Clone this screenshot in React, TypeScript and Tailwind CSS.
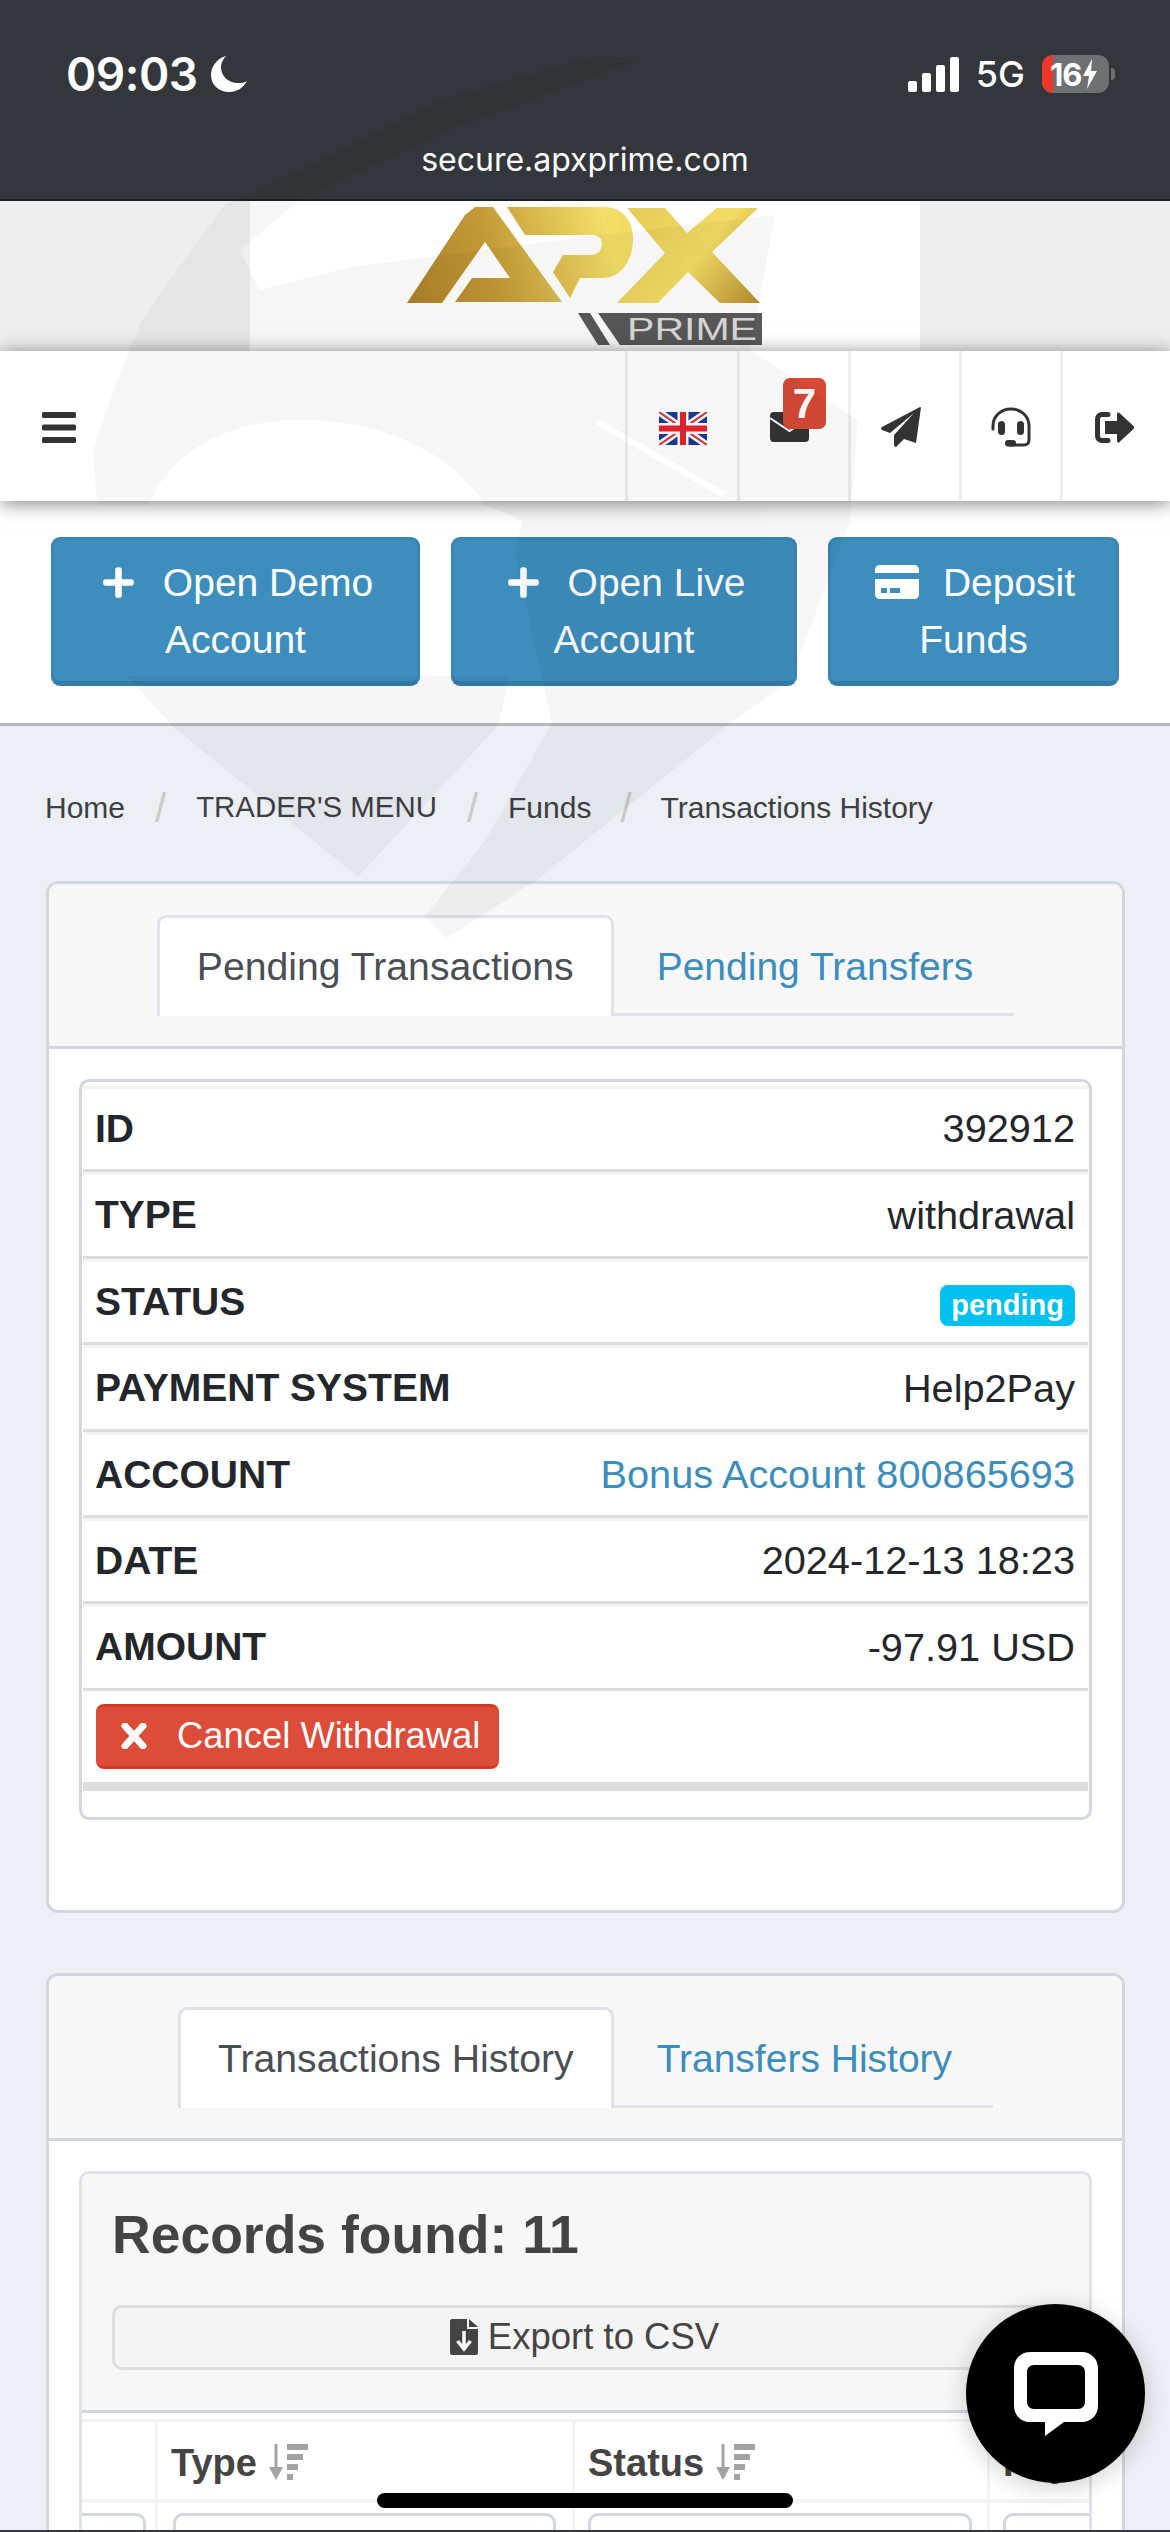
import { FaPlus } from 'react-icons/fa';

const rows = [
  { label: 'ID', value: '392912' },
  { label: 'TYPE', value: 'withdrawal' },
  { label: 'STATUS', value: 'pending', badge: true },
  { label: 'PAYMENT SYSTEM', value: 'Help2Pay' },
  { label: 'ACCOUNT', value: 'Bonus Account 800865693', link: true },
  { label: 'DATE', value: '2024-12-13 18:23' },
  { label: 'AMOUNT', value: '-97.91 USD' },
];

function Watermark() {
  return (
    <svg className="absolute left-0 top-0 z-20 pointer-events-none" width="1170" height="1000" viewBox="0 0 1170 1000">
      <g fill="#000" opacity="0.035">
        <path
          fillRule="evenodd"
          d="M597 55 L440 100 L300 170 L224 205 L170 280 L142 320 L110 400 L93 450 L97 505 L149 505 C170 450 230 420 300 420 C380 420 450 450 485 505 L522 520 L515 556 L552 723 L485 841 L425 916 L447 938 L537 880 L731 723 L791 680 L850 520 L858 420 L843 410 L750 350 L775 215 L600 235 L350 267 L260 290 L240 250 L300 200 L450 130 L640 60 Z M600 420 L727 493 L721 497 L595 424 Z"
        />
        <path d="M127 676 L510 676 L498 726 L358 877 L172 726 Z" />
      </g>
    </svg>
  );
}

function StatusBar() {
  return (
    <div className="h-[201px] bg-[#33363a] text-white relative shrink-0">
      <div className="flex items-center justify-between pt-[52px] pl-[66px] pr-[55px] h-[96px]">
        <div className="flex items-center gap-[13px]">
          <span className="font-['Inter',sans-serif] text-[46px] leading-none font-semibold tracking-[-0.5px]">09:03</span>
          <svg width="36" height="36" viewBox="0 0 36 36">
            <path d="M15 0 C5 3 0 11 0 19 C0 29 8 36 18 36 C26 36 32 32 36 25 C33 27 30 27 27 27 C17 27 10 20 10 11 C10 7 12 3 15 0 Z" fill="#fff" />
          </svg>
        </div>
        <div className="flex items-center">
          <svg width="52" height="35" viewBox="0 0 52 35" className="mr-[16px]">
            <rect x="0" y="24" width="9" height="11" rx="2" fill="#fff" />
            <rect x="14" y="16" width="9" height="19" rx="2" fill="#fff" />
            <rect x="28" y="8" width="9" height="27" rx="2" fill="#fff" />
            <rect x="42" y="0" width="9" height="35" rx="2" fill="#fff" />
          </svg>
          <span className="font-['Inter',sans-serif] text-[36px] leading-none font-medium mr-[17px]">5G</span>
          <div className="relative w-[67px] h-[38px] rounded-[11px] bg-[#6f7072] overflow-hidden flex items-center pl-[8px]">
            <div className="absolute left-0 top-0 bottom-0 w-[11px] bg-[#f0352b]" />
            <span className="relative font-['Inter',sans-serif] text-[31px] leading-none font-bold tracking-[-1px]">16</span>
            <svg width="16" height="30" viewBox="0 0 16 30" className="relative">
              <path d="M10 0 L1 17 H7 L5 30 L15 12 H9 Z" fill="#fff" />
            </svg>
          </div>
          <div className="w-[4px] h-[12px] rounded-r-full bg-[#6f7072] ml-[2px]" />
        </div>
      </div>
      <div className="text-center font-['Inter',sans-serif] text-[32px] leading-none absolute left-0 right-0 top-[144px]">secure.apxprime.com</div>
      <div className="absolute left-0 right-0 bottom-0 h-[2px] bg-[#1d1f21]" />
    </div>
  );
}

function Logo() {
  return (
    <svg width="670" height="150" viewBox="250 201 670 150" className="block">
      <defs>
        <linearGradient id="gold" gradientUnits="userSpaceOnUse" x1="407" y1="300" x2="760" y2="215">
          <stop offset="0" stopColor="#ae8029" />
          <stop offset="0.25" stopColor="#c39a36" />
          <stop offset="0.58" stopColor="#f4de68" />
          <stop offset="0.8" stopColor="#ecd35c" />
          <stop offset="1" stopColor="#dcbf4e" />
        </linearGradient>
        <linearGradient id="goldx" gradientUnits="userSpaceOnUse" x1="640" y1="210" x2="760" y2="303">
          <stop offset="0" stopColor="#e6cc58" />
          <stop offset="0.5" stopColor="#f3dc64" />
          <stop offset="1" stopColor="#b98c2e" />
        </linearGradient>
      </defs>
      <path d="M407 303 L465 215 L475 207 L493 207 L562 302 L455 302 L472 278 L510 278 L485 242 L442 303 Z" fill="url(#gold)" />
      <path d="M507 207 L603 207 C622 207 633 220 633 238 C633 262 620 278 603 278 L580 278 L570 298 L553 272 L563 255 L590 255 C598 255 602 250 602 244 C602 238 598 235 592 235 L525 235 Z" fill="url(#gold)" />
      <path d="M627 208 L665 208 L687 233 L717 208 L758 208 L712 252 L760 303 L720 303 L688 272 L658 303 L617 303 L665 253 Z" fill="url(#goldx)" />
      <path d="M578 313 L590 313 L610 345 L598 345 Z" fill="#5a5a5a" />
      <path d="M598 313 L762 313 L762 345 L620 345 Z" fill="#5a5a5a" />
      <text x="627" y="340" fill="#dddddd" fontFamily="'Liberation Sans',sans-serif" fontSize="32" textLength="130" lengthAdjust="spacingAndGlyphs">PRIME</text>
    </svg>
  );
}

function NavBar() {
  return (
    <div className="relative z-10 h-[150px] bg-white shadow-[0_2px_18px_rgba(0,0,0,0.5)] flex items-center justify-between shrink-0">
      <svg width="34" height="31" viewBox="0 0 34 31" className="ml-[42px] mt-[2px]">
        <rect x="0" y="0" width="34" height="6" rx="1.5" fill="#333" />
        <rect x="0" y="12.5" width="34" height="6" rx="1.5" fill="#333" />
        <rect x="0" y="25" width="34" height="6" rx="1.5" fill="#333" />
      </svg>
      <div className="flex h-full">
        <div className="w-[112px] border-l-[3px] border-[#eeeeee] flex items-center justify-center pt-[4px]">
          <svg width="48" height="33" viewBox="0 0 48 33" className="blur-[0.6px]">
            <rect width="48" height="33" fill="#1c3a94" />
            <path d="M0 0 L48 33 M48 0 L0 33" stroke="#fff" strokeWidth="7" />
            <path d="M0 0 L48 33 M48 0 L0 33" stroke="#d9343c" strokeWidth="2" />
            <path d="M24 0 V33 M0 16.5 H48" stroke="#fff" strokeWidth="11" />
            <path d="M24 0 V33 M0 16.5 H48" stroke="#e5252e" strokeWidth="6" />
          </svg>
        </div>
        <div className="relative w-[111px] border-l-[3px] border-[#eeeeee] flex items-center justify-center pr-[10px] pt-[1px]">
          <svg width="39" height="30" viewBox="0 0 39 30">
            <rect width="39" height="30" rx="4" fill="#333" />
            <path d="M0 6 L19.5 19 L39 6" fill="none" stroke="#fff" strokeWidth="2" />
          </svg>
          <div className="absolute left-[43px] top-[27px] w-[43px] h-[51px] rounded-[7px] bg-[#d74936] text-white font-['Liberation_Sans',sans-serif] font-bold text-[42px] leading-[51px] text-center">7</div>
        </div>
        <div className="w-[111px] border-l-[3px] border-[#eeeeee] flex items-center justify-center pr-[8px] pt-[2px]">
          <svg width="40" height="40" viewBox="0 0 40 40">
            <path d="M39 0 C39.6 0 40 0.5 39.9 1 L35 36 L23 32 L15 40 C14 40 13 39 13 38 L13 28 L33 6 L9 26 L1 23 C-0.4 22 -0.2 21 1 20 Z" fill="#333" />
          </svg>
        </div>
        <div className="w-[101px] border-l-[3px] border-[#eeeeee] flex items-center justify-center pt-[2px]">
          <svg width="40" height="40" viewBox="0 0 40 40">
            <path d="M2 22 V19 C2 9 10 2 20 2 C30 2 38 9 38 19 V33 C38 36 36 38 33 38 H19" fill="none" stroke="#333" strokeWidth="3" strokeLinecap="round" />
            <rect x="7" y="14" width="7" height="14" rx="3.5" fill="#333" />
            <rect x="26" y="14" width="7" height="14" rx="3.5" fill="#333" />
            <rect x="14" y="33" width="11" height="6.5" rx="3" fill="#333" />
          </svg>
        </div>
        <div className="w-[110px] border-l-[3px] border-[#eeeeee] flex items-center justify-center pr-[5px] pt-[2px]">
          <svg width="39" height="31" viewBox="0 0 39 31">
            <path d="M13 2.5 H7 C4.5 2.5 2.5 4.5 2.5 7 V24 C2.5 26.5 4.5 28.5 7 28.5 H13" fill="none" stroke="#333" strokeWidth="5" strokeLinecap="round" />
            <path d="M10 9 H22 V2 C22 0.5 23.5 0 24.5 1 L38.5 14 C39.2 14.8 39.2 16 38.5 17 L24.5 30 C23.5 31 22 30.5 22 29 V22 H10 Z" fill="#333" />
          </svg>
        </div>
      </div>
    </div>
  );
}

function ActionButton({ width, icon, first, second }: { width: string; icon: React.ReactNode; first: string; second: string }) {
  return (
    <button className={`${width} h-[149px] rounded-[9px] bg-[#3d8ebd] border-[3px] border-[#3a86b3] border-b-[5px] border-b-[#357ca6] text-white text-[39px] leading-[57px] text-center`}>
      <span className="flex items-center justify-center pl-[3px]">
        {icon}
        {first}
      </span>
      {second}
    </button>
  );
}

function Tabs({ active, other }: { active: string; other: string }) {
  return (
    <div className="bg-[#f7f7f7] border-b-[3px] border-[#d2d6e0] h-[165px] pt-[31px] flex justify-center items-start">
      <div className="flex h-[101px]">
        <div className="bg-white border-[3px] border-b-0 border-[#dfe2e8] rounded-t-[9px] px-[37px] pt-[26px] text-[39.2px] leading-[46px] text-[#4a4f55]">{active}</div>
        <div className="border-b-[3px] border-[#dfe2e8] pl-[43px] pr-[41px] pt-[29px] text-[39px] leading-[46px] text-[#3c8dbc]">{other}</div>
      </div>
    </div>
  );
}

function SortIcon() {
  return (
    <svg width="39" height="36" viewBox="0 0 39 36" className="ml-[12px] mt-[-4px]">
      <path d="M7 0 V30" stroke="#a3a3a3" strokeWidth="3" />
      <path d="M0 23 H14 L7 36 Z" fill="#a3a3a3" />
      <rect x="18" y="0" width="21" height="6" fill="#a3a3a3" />
      <rect x="18" y="10" width="16" height="6" fill="#a3a3a3" />
      <rect x="18" y="20" width="11" height="6" fill="#a3a3a3" />
      <rect x="18" y="30" width="6" height="6" fill="#a3a3a3" />
    </svg>
  );
}

export default function App() {
  return (
    <div className="relative w-[1170px] h-[2532px] overflow-hidden bg-[#eceff4] font-['Liberation_Sans',Arial,sans-serif] flex flex-col">
      <Watermark />
      <StatusBar />
      <div className="h-[150px] bg-[#eeeeee] flex justify-center shrink-0">
        <div className="w-[670px] h-full bg-white">
          <Logo />
        </div>
      </div>
      <NavBar />

      <div className="bg-white h-[225px] shrink-0 border-b-[3px] border-[#b8b9ba] flex gap-[31px] pl-[51px] pt-[36px]">
        <ActionButton width="w-[369px]" icon={<FaPlus className="w-[35px] h-[35px] mr-[27px]" />} first="Open Demo" second="Account" />
        <ActionButton width="w-[346px]" icon={<FaPlus className="w-[35px] h-[35px] mr-[27px]" />} first="Open Live" second="Account" />
        <ActionButton
          width="w-[291px]"
          icon={
            <svg width="44" height="34" viewBox="0 0 44 34" className="mr-[24px]">
              <path d="M0 5 C0 2 2 0 5 0 H39 C42 0 44 2 44 5 V8 H0 Z" fill="#fff" />
              <path d="M0 14 H44 V29 C44 32 42 34 39 34 H5 C2 34 0 32 0 29 Z" fill="#fff" />
              <rect x="6" y="23" width="6" height="5" fill="#3d8ebd" />
              <rect x="15" y="23" width="10" height="5" fill="#3d8ebd" />
            </svg>
          }
          first="Deposit"
          second="Funds"
        />
      </div>

      <div className="flex items-center h-[155px] shrink-0 pl-[45px] pt-[8px] text-[30px] text-[#3c4044]">
        <span>Home</span>
        <span className="text-[#c9c9c9] text-[40px] mx-[30px]">/</span>
        <span className="text-[29.4px]">TRADER'S MENU</span>
        <span className="text-[#c9c9c9] text-[40px] mx-[30px]">/</span>
        <span>Funds</span>
        <span className="text-[#c9c9c9] text-[40px] mx-[29px]">/</span>
        <span>Transactions History</span>
      </div>

      <div className="ml-[46px] mr-[45px] shrink-0 border-[3px] border-[#d2d6e0] rounded-[12px] bg-white overflow-hidden">
        <Tabs active="Pending Transactions" other="Pending Transfers" />
        <div className="px-[30px] pt-[30px] pb-[90px]">
          <div className="border-[3px] border-[#d2d6e0] rounded-[10px] px-[1px] pt-[4px] pb-[26px]">
            {rows.map((row) => (
              <div key={row.label} className="h-[86.4px] border-t-[3px] border-t-[#f3f3f3] border-b-[3px] border-b-[#dcdcdc] flex items-center justify-between pl-[12px] pr-[13px] text-[39.7px] text-[#23272b]">
                <span className="font-bold text-[39px]">{row.label}</span>
                {row.badge ? (
                  <span className="mt-[8px] h-[41px] rounded-[8px] bg-[#00c0ef] text-white font-bold text-[29px] leading-[41px] px-[11px]">{row.value}</span>
                ) : row.link ? (
                  <span className="text-[#3c8dbc]">{row.value}</span>
                ) : (
                  <span>{row.value}</span>
                )}
              </div>
            ))}
            <div className="pl-[13px] pt-[13px] pb-[13px]">
              <button className="w-[403px] h-[65px] rounded-[8px] bg-[#dd4b39] border-y-[3px] border-[#d73925] text-white text-[36.4px] flex items-center pl-[25px] whitespace-nowrap">
                <svg width="26" height="26" viewBox="0 0 26 26" className="mr-[30px]">
                  <path d="M4 3 L22 23 M22 3 L4 23" stroke="#fff" strokeWidth="7" strokeLinecap="round" />
                </svg>
                Cancel Withdrawal
              </button>
            </div>
            <div className="h-[9px] bg-[#dcdcdc]" />
          </div>
        </div>
      </div>

      <div className="ml-[46px] mr-[45px] mt-[60px] shrink-0 border-[3px] border-[#d2d6e0] rounded-[12px] bg-white overflow-hidden">
        <Tabs active="Transactions History" other="Transfers History" />
        <div className="px-[30px] pt-[30px]">
          <div className="border-[3px] border-[#dfe2e8] rounded-[10px] overflow-hidden">
            <div className="bg-[#f7f7f7] border-b-[3px] border-[#d2d6e0] h-[239px] pl-[30px] pr-[12px] pt-[31px]">
              <div className="text-[53.5px] leading-[60px] font-bold text-[#444444]">Records found: 11</div>
              <div className="mt-[40px] h-[65px] border-[3px] border-[#dddddd] rounded-[10px] bg-[#f4f4f4] flex items-center justify-center text-[36.5px] text-[#444444] pr-[20px]">
                <svg width="28" height="36" viewBox="0 0 28 36" className="mr-[10px]">
                  <path d="M2 0 H17 V10 H28 V34 C28 35 27 36 26 36 H2 C1 36 0 35 0 34 V2 C0 1 1 0 2 0 Z M19 0 L28 8 H19 Z" fill="#444" />
                  <path d="M14 12 V28 M7.5 22 L14 30 L20.5 22" fill="none" stroke="#fff" strokeWidth="3.5" />
                </svg>
                Export to CSV
              </div>
            </div>
            <div className="mt-[6px] border-t-[3px] border-[#f3f3f3] flex h-[84px] border-b-[4px] border-b-[#f3f3f3] text-[38px] font-bold text-[#444444]">
              <div className="w-[76px] shrink-0 border-r-[3px] border-[#f3f3f3]" />
              <div className="w-[417px] shrink-0 border-r-[3px] border-[#f3f3f3] flex items-center pl-[13px] pt-[7px]">
                Type
                <SortIcon />
              </div>
              <div className="w-[415px] shrink-0 border-r-[3px] border-[#f3f3f3] flex items-center pl-[13px] pt-[7px]">
                Status
                <SortIcon />
              </div>
              <div className="flex-1 flex items-center pl-[13px] pt-[7px] overflow-hidden">Pay</div>
            </div>
            <div className="flex">
              <div className="w-[76px] shrink-0 border-r-[3px] border-[#f3f3f3] pt-[10px] pr-[9px]">
                <div className="h-[40px] border-[3px] border-l-0 border-[#d2d6e0] rounded-tr-[10px]" />
              </div>
              <div className="w-[417px] shrink-0 border-r-[3px] border-[#f3f3f3] pt-[10px] pl-[15px] pr-[16px]">
                <div className="h-[40px] border-[3px] border-[#d2d6e0] rounded-[10px]" />
              </div>
              <div className="w-[415px] shrink-0 border-r-[3px] border-[#f3f3f3] pt-[10px] pl-[13px] pr-[15px]">
                <div className="h-[40px] border-[3px] border-[#d2d6e0] rounded-[10px]" />
              </div>
              <div className="flex-1 pt-[10px] pl-[13px]">
                <div className="h-[40px] border-[3px] border-r-0 border-[#d2d6e0] rounded-tl-[10px]" />
              </div>
            </div>
          </div>
        </div>
      </div>

      {/* Chat launcher */}
      <div className="absolute left-[966px] top-[2304px] z-30 w-[179px] h-[179px] rounded-full bg-black shadow-[0_4px_24px_rgba(0,0,0,0.2)] flex items-center justify-center">
        <svg width="84" height="84" viewBox="0 0 84 84">
          <path d="M16 0 H68 C77 0 84 7 84 16 V54 C84 63 77 70 68 70 H50 L31 84 V70 H16 C7 70 0 63 0 54 V16 C0 7 7 0 16 0 Z M20 13 C16 13 13 16 13 20 V50 C13 54 16 57 20 57 H46 L64 57 C68 57 71 54 71 50 V20 C71 16 68 13 64 13 Z" fill="#fff" fillRule="evenodd" />
        </svg>
      </div>
      {/* Home indicator */}
      <div className="absolute left-[377px] top-[2493px] z-30 w-[416px] h-[15px] rounded-full bg-black" />
      <div className="absolute left-0 right-0 bottom-0 z-30 h-[2px] bg-[#33363a]" />
    </div>
  );
}
